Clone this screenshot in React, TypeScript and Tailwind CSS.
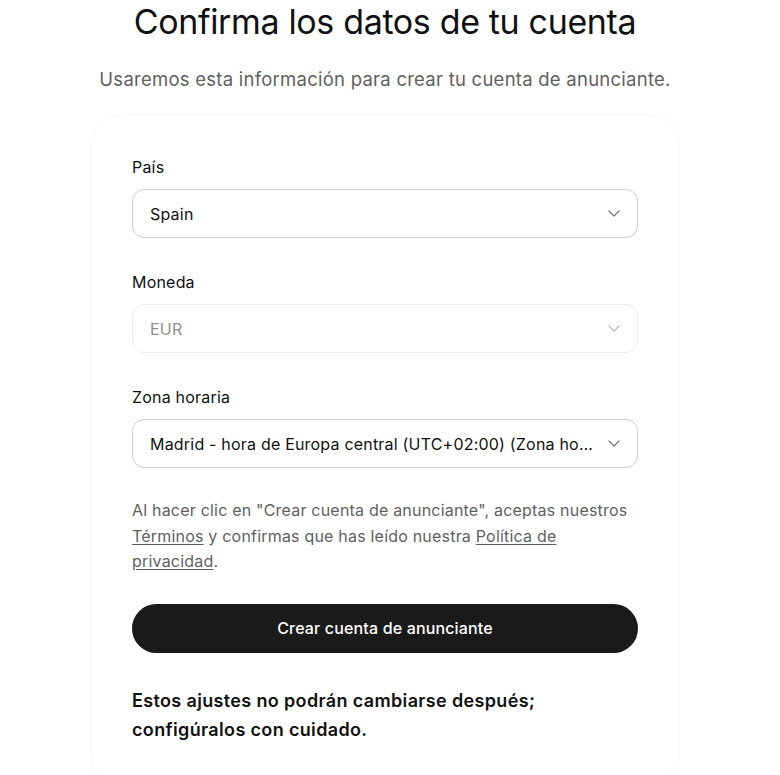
import { type ReactNode } from "react";

const FONT = { fontFamily: "Inter, 'Noto Sans', sans-serif" };

function Chevron({ dim }: { dim?: boolean }) {
  return (
    <svg
      viewBox="0 0 12 7"
      className={`w-[12px] h-[7px] flex-shrink-0 ${dim ? "text-[#b5b5b5]" : "text-[#767676]"}`}
      fill="none"
      stroke="currentColor"
      strokeWidth="1.2"
      strokeLinecap="round"
      strokeLinejoin="round"
    >
      <path d="M1 1l5 5 5-5" />
    </svg>
  );
}

function Field({ label, children, disabled }: { label: string; children: ReactNode; disabled?: boolean }) {
  return (
    <div className="flex flex-col gap-[10px]">
      <label className="text-base leading-6 tracking-[0.2px] text-[#111111]">{label}</label>
      <div
        className={`h-[49px] rounded-xl border flex items-center justify-between pl-[17px] pr-[17px] gap-3 ${
          disabled ? "border-[#ececec] text-[#8e8e8e]" : "border-[#cdcdcd] text-[#111111]"
        }`}
      >
        <span className="truncate text-base tracking-[0.2px]">{children}</span>
        <Chevron dim={disabled} />
      </div>
    </div>
  );
}

export default function App() {
  return (
    <div className="min-h-screen bg-white flex flex-col items-center pr-[10px]" style={FONT}>
      {/* Header */}
      <h1 className="text-[34px] leading-[40px] text-[#111111] tracking-[-0.35px] pt-[2px]">
        Confirma los datos de tu cuenta
      </h1>
      <p className="mt-[24px] text-[18.5px] leading-[26px] tracking-[0.25px] text-[#5f5f5f]">
        Usaremos esta información para crear tu cuenta de anunciante.
      </p>

      {/* Card */}
      <div className="mt-[22px] w-[590px] rounded-[32px] border border-[#f8f8f8] px-[41px] pt-[40px] pb-[40px] flex flex-col">
        <div className="flex flex-col gap-[32px]">
          <Field label="País">Spain</Field>
          <Field label="Moneda" disabled>EUR</Field>
          <Field label="Zona horaria">
            Madrid - hora de Europa central (UTC+02:00) (Zona horaria de Europa central)
          </Field>
        </div>

        <p className="mt-[30px] text-base leading-[25.5px] tracking-[0.2px] text-[#5f5f5f]">
          Al hacer clic en "Crear cuenta de anunciante", aceptas nuestros{" "}
          <a className="underline underline-offset-2">Términos</a> y confirmas que has leído nuestra{" "}
          <a className="underline underline-offset-2">Política de privacidad</a>.
        </p>

        <button className="mt-[29px] h-[49px] rounded-full bg-[#1a1a1a] text-white text-base font-medium tracking-[0.15px]">
          Crear cuenta de anunciante
        </button>

        <p className="mt-[33px] text-lg leading-[29px] font-semibold tracking-[0.35px] text-[#111111]">
          Estos ajustes no podrán cambiarse después;
          <br />
          configúralos con cuidado.
        </p>
      </div>
    </div>
  );
}
